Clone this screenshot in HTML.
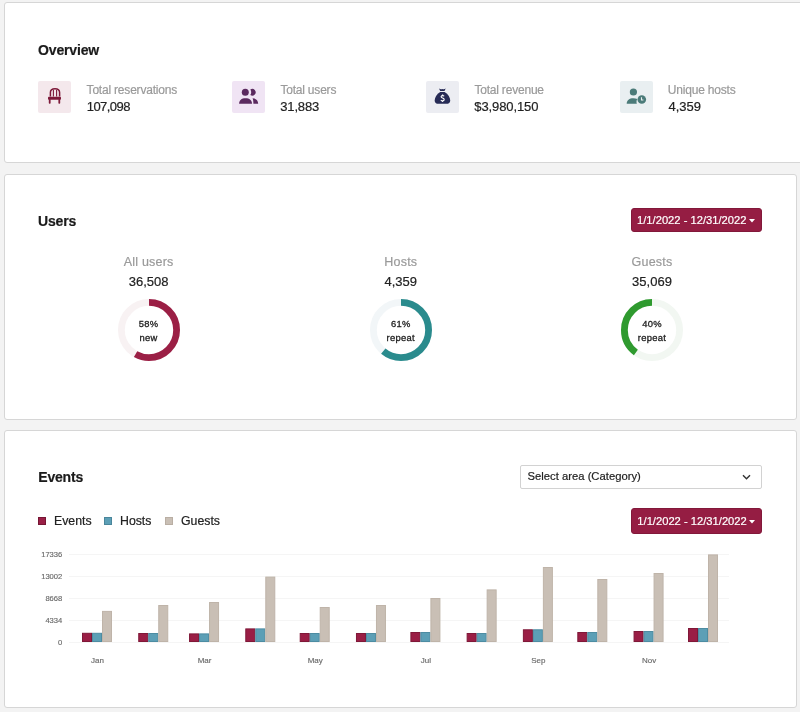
<!DOCTYPE html>
<html><head><meta charset="utf-8">
<style>
*{box-sizing:border-box;margin:0;padding:0}
html,body{will-change:transform;width:800px;height:712px;overflow:hidden;background:#f3f3f3;font-family:"Liberation Sans",sans-serif;}
.card{position:absolute;background:#fff;border:1px solid #d6d6d6;border-radius:3px;}
.abs{position:absolute;white-space:nowrap;line-height:1;-webkit-text-stroke:0.2px currentColor;}
.h{font-size:14px;font-weight:bold;color:#1b1b1b;letter-spacing:-0.15px;}
.lbl{font-size:12px;color:#9a9a9a;letter-spacing:-0.2px;}
.val{font-size:13px;color:#222;}
.ibox{position:absolute;width:33px;height:32px;border-radius:2px;}
.btn{position:absolute;background:#951d43;border:1px solid #82183a;border-radius:3px;color:#fff;font-size:11px;}
.ctr{text-align:center;}
</style></head><body>

<!-- Card 1 -->
<div class="card" style="left:4px;top:2px;width:820px;height:161px;"></div>
<div class="abs h" style="left:38px;top:42.6px;">Overview</div>

<div class="ibox" style="left:38px;top:81px;background:#f4e8ec;"></div>
<svg class="abs" style="left:38px;top:81px" width="33" height="32" viewBox="0 0 33 32">
  <g fill="none" stroke="#7d1a3a" stroke-width="1.5">
    <path d="M12.4 15.5 V11.6 C12.4 8.9 14.3 7.8 17 7.8 C19.7 7.8 21.6 8.9 21.6 11.6 V15.5"/>
    <path d="M15.4 9 V15.5 M18.6 9 V15.5" stroke-width="1.1"/>
  </g>
  <g fill="#7d1a3a">
    <rect x="10" y="15.8" width="13" height="3" rx="0.8"/>
    <rect x="10.8" y="18" width="1.8" height="4.8" rx="0.7"/>
    <rect x="20.4" y="18" width="1.8" height="4.8" rx="0.7"/>
  </g>
</svg>
<div class="abs lbl" style="left:86.6px;top:84px;">Total reservations</div>
<div class="abs val" style="left:86.7px;top:100.3px;letter-spacing:-0.54px">107,098</div>

<div class="ibox" style="left:232px;top:81px;background:#f0e4f4;"></div>
<svg class="abs" style="left:232px;top:81px" width="33" height="32" viewBox="0 0 33 32">
  <g fill="#5b2a5f">
    <circle cx="13.3" cy="11.3" r="3.5"/>
    <path d="M7.1 22.8 C7.1 19.2 9.5 17.2 13.5 17.2 C17.5 17.2 20 19.2 20 22.8 Z"/>
    <path d="M18.3 8.5 A3.4 3.4 0 1 1 18.3 14.1 C18.9 13.3 19.2 12.3 19.2 11.3 C19.2 10.3 18.9 9.3 18.3 8.5 Z"/>
    <path d="M20.6 17.2 C24 17.5 26.2 19.4 26.2 22.8 L21.4 22.8 C21.4 20.5 21.2 18.6 20.6 17.2 Z"/>
  </g>
</svg>
<div class="abs lbl" style="left:280.4px;top:84px;">Total users</div>
<div class="abs val" style="left:280.3px;top:100.3px;letter-spacing:-0.18px">31,883</div>

<div class="ibox" style="left:426px;top:81px;background:#ecedf2;"></div>
<svg class="abs" style="left:426px;top:81px" width="33" height="32" viewBox="0 0 33 32">
  <g fill="#272b56">
    <path d="M13 7.6 C14.5 8.3 15.3 8.2 16.3 7.9 C17.3 8.2 18.2 8.3 19.7 7.6 L18.5 10 L14.2 10 Z"/>
    <path d="M14.2 11 L18.6 11 C22.3 13.2 24.2 16.6 24.2 19.4 C24.2 21.8 22.8 22.8 20.3 22.8 L12.5 22.8 C10 22.8 8.7 21.8 8.7 19.4 C8.7 16.6 10.6 13.2 14.2 11 Z"/>
  </g>
  <path d="M18.1 15.3 C17.8 14.8 17.3 14.6 16.6 14.6 C15.7 14.6 15.1 15.1 15.1 15.8 C15.1 17.4 18.2 16.8 18.2 18.6 C18.2 19.4 17.5 19.9 16.5 19.9 C15.8 19.9 15.2 19.6 14.9 19.1 M16.6 13.6 V14.6 M16.6 19.9 V20.9" stroke="#fff" stroke-width="1.1" fill="none"/>
</svg>
<div class="abs lbl" style="left:474.4px;top:84px;">Total revenue</div>
<div class="abs val" style="left:474.3px;top:100.3px;letter-spacing:-0.1px">$3,980,150</div>

<div class="ibox" style="left:620px;top:81px;background:#e9eff1;"></div>
<svg class="abs" style="left:620px;top:81px" width="33" height="32" viewBox="0 0 33 32">
  <g fill="#4b7b79">
    <circle cx="13.4" cy="11" r="3.6"/>
    <path d="M6.7 22.8 C6.7 19.2 9.4 17.2 13.3 17.2 C14.8 17.2 16.2 17.4 17.3 17.9 C16.8 18.8 16.5 19.7 16.5 20.7 C16.5 21.5 16.6 22.2 16.9 22.8 Z"/>
    <circle cx="21.8" cy="18.5" r="4.3"/>
  </g>
  <path d="M21.5 16.3 V19 H23.4" stroke="#e9eff1" stroke-width="1.1" fill="none"/>
</svg>
<div class="abs lbl" style="left:667.8px;top:84px;">Unique hosts</div>
<div class="abs val" style="left:668.5px;top:100.3px;">4,359</div>

<!-- Card 2 -->
<div class="card" style="left:4px;top:174px;width:793px;height:246px;"></div>
<div class="abs h" style="left:38px;top:214px;">Users</div>
<div class="btn" style="left:631px;top:208.3px;width:131px;height:24px;"></div>
<div class="abs" style="left:637px;top:214.6px;font-size:11.2px;color:#fff;">1/1/2022 - 12/31/2022</div>
<svg class="abs" style="left:748.6px;top:218.6px" width="7" height="4"><path d="M0 0 L6 0 L3 3.5 Z" fill="#fff"/></svg>

<div class="abs lbl ctr" style="left:98.6px;top:255.5px;width:100px;font-size:12.5px;letter-spacing:0.2px;">All users</div>
<div class="abs val ctr" style="left:98.6px;top:275.3px;width:100px;">36,508</div>
<svg class="abs" style="left:113.80000000000001px;top:294.9px" width="70" height="70" viewBox="0 0 70 70">
  <circle cx="35" cy="35" r="27.6" fill="none" stroke="#f8f2f3" stroke-width="6.8"/>
  <circle cx="35" cy="35" r="27.6" fill="none" stroke="#9b1f45" stroke-width="6.8" stroke-dasharray="100.58 400" transform="rotate(-90 35 35)"/>
</svg>
<div class="abs ctr" style="left:98.6px;top:318.7px;width:100px;font-size:9.4px;color:#222;letter-spacing:0.25px;-webkit-text-stroke:0.3px #222;">58%</div>
<div class="abs ctr" style="left:98.6px;top:333.2px;width:100px;font-size:9.4px;color:#222;letter-spacing:0.3px;-webkit-text-stroke:0.3px #222;">new</div>

<div class="abs lbl ctr" style="left:350.8px;top:255.5px;width:100px;font-size:12.5px;letter-spacing:0.2px;">Hosts</div>
<div class="abs val ctr" style="left:350.8px;top:275.3px;width:100px;">4,359</div>
<svg class="abs" style="left:366.2px;top:294.9px" width="70" height="70" viewBox="0 0 70 70">
  <circle cx="35" cy="35" r="27.6" fill="none" stroke="#f2f6f8" stroke-width="6.8"/>
  <circle cx="35" cy="35" r="27.6" fill="none" stroke="#2a8b8d" stroke-width="6.8" stroke-dasharray="105.78 400" transform="rotate(-90 35 35)"/>
</svg>
<div class="abs ctr" style="left:350.8px;top:318.7px;width:100px;font-size:9.4px;color:#222;letter-spacing:0.25px;-webkit-text-stroke:0.3px #222;">61%</div>
<div class="abs ctr" style="left:350.8px;top:333.2px;width:100px;font-size:9.4px;color:#222;letter-spacing:0.3px;-webkit-text-stroke:0.3px #222;">repeat</div>

<div class="abs lbl ctr" style="left:602px;top:255.5px;width:100px;font-size:12.5px;letter-spacing:0.2px;">Guests</div>
<div class="abs val ctr" style="left:602px;top:275.3px;width:100px;">35,069</div>
<svg class="abs" style="left:616.9px;top:294.9px" width="70" height="70" viewBox="0 0 70 70">
  <circle cx="35" cy="35" r="27.6" fill="none" stroke="#f2f7f2" stroke-width="6.8"/>
  <circle cx="35" cy="35" r="27.6" fill="none" stroke="#2f9a2f" stroke-width="6.8" stroke-dasharray="69.37 400" transform="translate(70,0) scale(-1,1) rotate(-90 35 35)"/>
</svg>
<div class="abs ctr" style="left:602px;top:318.7px;width:100px;font-size:9.4px;color:#222;letter-spacing:0.25px;-webkit-text-stroke:0.3px #222;">40%</div>
<div class="abs ctr" style="left:602px;top:333.2px;width:100px;font-size:9.4px;color:#222;letter-spacing:0.3px;-webkit-text-stroke:0.3px #222;">repeat</div>

<!-- Card 3 -->
<div class="card" style="left:4px;top:430px;width:793px;height:278px;"></div>
<div class="abs h" style="left:38.3px;top:470.3px;letter-spacing:-0.2px">Events</div>
<div class="abs" style="left:520px;top:465px;width:242px;height:24px;border:1px solid #d2d2d2;border-radius:2px;background:#fff;"></div>
<div class="abs" style="left:527.6px;top:471.4px;font-size:11.25px;color:#222;">Select area (Category)</div>
<svg class="abs" style="left:742px;top:473.5px" width="10" height="7"><path d="M1 1.2 L4.5 4.8 L8 1.2" stroke="#333" stroke-width="1.4" fill="none"/></svg>

<div class="abs" style="left:38px;top:517px;width:8px;height:8px;background:#9a1f46;border:1px solid #761634;"></div>
<div class="abs" style="left:54px;top:515px;font-size:12.3px;color:#222;">Events</div>
<div class="abs" style="left:104px;top:517px;width:8px;height:8px;background:#5c9fb6;border:1px solid #4a869b;"></div>
<div class="abs" style="left:120px;top:515px;font-size:12.3px;color:#222;">Hosts</div>
<div class="abs" style="left:165px;top:517px;width:8px;height:8px;background:#c9bfb5;border:1px solid #b9aea3;"></div>
<div class="abs" style="left:181px;top:515px;font-size:12.3px;color:#222;">Guests</div>

<div class="btn" style="left:631px;top:508px;width:131px;height:26px;"></div>
<div class="abs" style="left:637.3px;top:516.2px;font-size:11.2px;color:#fff;">1/1/2022 - 12/31/2022</div>
<svg class="abs" style="left:749.3px;top:519.7px" width="7" height="4"><path d="M0 0 L6 0 L3 3.5 Z" fill="#fff"/></svg>

<svg id="chart" class="abs" style="left:0;top:540px" width="800" height="140" viewBox="0 540 800 140" font-family="Liberation Sans">
<line x1="69" y1="554.5" x2="729" y2="554.5" stroke="#f5f5f5" stroke-width="1"/>
<text x="62.3" y="557" text-anchor="end" font-size="7.6" fill="#6a6a6a" stroke="#6a6a6a" stroke-width="0.15">17336</text>
<line x1="69" y1="576.5" x2="729" y2="576.5" stroke="#f5f5f5" stroke-width="1"/>
<text x="62.3" y="579" text-anchor="end" font-size="7.6" fill="#6a6a6a" stroke="#6a6a6a" stroke-width="0.15">13002</text>
<line x1="69" y1="598.5" x2="729" y2="598.5" stroke="#f5f5f5" stroke-width="1"/>
<text x="62.3" y="601" text-anchor="end" font-size="7.6" fill="#6a6a6a" stroke="#6a6a6a" stroke-width="0.15">8668</text>
<line x1="69" y1="620.5" x2="729" y2="620.5" stroke="#f5f5f5" stroke-width="1"/>
<text x="62.3" y="623" text-anchor="end" font-size="7.6" fill="#6a6a6a" stroke="#6a6a6a" stroke-width="0.15">4334</text>
<line x1="69" y1="642.5" x2="729" y2="642.5" stroke="#f5f5f5" stroke-width="1"/>
<text x="62.3" y="645" text-anchor="end" font-size="7.6" fill="#6a6a6a" stroke="#6a6a6a" stroke-width="0.15">0</text>
<rect x="82.50" y="633.30" width="9" height="8.20" fill="#9a1e45" stroke="#7f1838" stroke-width="1"/>
<rect x="92.50" y="633.30" width="9" height="8.20" fill="#5c9fb6" stroke="#4d8ca2" stroke-width="1"/>
<rect x="102.50" y="611.40" width="9" height="30.10" fill="#c9bfb5" stroke="#bfb4a9" stroke-width="1"/>
<rect x="138.75" y="633.50" width="9" height="8.00" fill="#9a1e45" stroke="#7f1838" stroke-width="1"/>
<rect x="148.75" y="633.50" width="9" height="8.00" fill="#5c9fb6" stroke="#4d8ca2" stroke-width="1"/>
<rect x="158.75" y="605.50" width="9" height="36.00" fill="#c9bfb5" stroke="#bfb4a9" stroke-width="1"/>
<rect x="189.55" y="633.90" width="9" height="7.60" fill="#9a1e45" stroke="#7f1838" stroke-width="1"/>
<rect x="199.55" y="633.90" width="9" height="7.60" fill="#5c9fb6" stroke="#4d8ca2" stroke-width="1"/>
<rect x="209.55" y="602.50" width="9" height="39.00" fill="#c9bfb5" stroke="#bfb4a9" stroke-width="1"/>
<rect x="245.79" y="628.90" width="9" height="12.60" fill="#9a1e45" stroke="#7f1838" stroke-width="1"/>
<rect x="255.79" y="628.90" width="9" height="12.60" fill="#5c9fb6" stroke="#4d8ca2" stroke-width="1"/>
<rect x="265.79" y="577.10" width="9" height="64.40" fill="#c9bfb5" stroke="#bfb4a9" stroke-width="1"/>
<rect x="300.22" y="633.50" width="9" height="8.00" fill="#9a1e45" stroke="#7f1838" stroke-width="1"/>
<rect x="310.22" y="633.50" width="9" height="8.00" fill="#5c9fb6" stroke="#4d8ca2" stroke-width="1"/>
<rect x="320.22" y="607.50" width="9" height="34.00" fill="#c9bfb5" stroke="#bfb4a9" stroke-width="1"/>
<rect x="356.47" y="633.50" width="9" height="8.00" fill="#9a1e45" stroke="#7f1838" stroke-width="1"/>
<rect x="366.47" y="633.50" width="9" height="8.00" fill="#5c9fb6" stroke="#4d8ca2" stroke-width="1"/>
<rect x="376.47" y="605.50" width="9" height="36.00" fill="#c9bfb5" stroke="#bfb4a9" stroke-width="1"/>
<rect x="410.90" y="632.50" width="9" height="9.00" fill="#9a1e45" stroke="#7f1838" stroke-width="1"/>
<rect x="420.90" y="632.50" width="9" height="9.00" fill="#5c9fb6" stroke="#4d8ca2" stroke-width="1"/>
<rect x="430.90" y="598.50" width="9" height="43.00" fill="#c9bfb5" stroke="#bfb4a9" stroke-width="1"/>
<rect x="467.15" y="633.50" width="9" height="8.00" fill="#9a1e45" stroke="#7f1838" stroke-width="1"/>
<rect x="477.15" y="633.50" width="9" height="8.00" fill="#5c9fb6" stroke="#4d8ca2" stroke-width="1"/>
<rect x="487.15" y="589.90" width="9" height="51.60" fill="#c9bfb5" stroke="#bfb4a9" stroke-width="1"/>
<rect x="523.39" y="629.80" width="9" height="11.70" fill="#9a1e45" stroke="#7f1838" stroke-width="1"/>
<rect x="533.39" y="629.80" width="9" height="11.70" fill="#5c9fb6" stroke="#4d8ca2" stroke-width="1"/>
<rect x="543.39" y="567.50" width="9" height="74.00" fill="#c9bfb5" stroke="#bfb4a9" stroke-width="1"/>
<rect x="577.82" y="632.50" width="9" height="9.00" fill="#9a1e45" stroke="#7f1838" stroke-width="1"/>
<rect x="587.82" y="632.50" width="9" height="9.00" fill="#5c9fb6" stroke="#4d8ca2" stroke-width="1"/>
<rect x="597.82" y="579.50" width="9" height="62.00" fill="#c9bfb5" stroke="#bfb4a9" stroke-width="1"/>
<rect x="634.07" y="631.50" width="9" height="10.00" fill="#9a1e45" stroke="#7f1838" stroke-width="1"/>
<rect x="644.07" y="631.50" width="9" height="10.00" fill="#5c9fb6" stroke="#4d8ca2" stroke-width="1"/>
<rect x="654.07" y="573.50" width="9" height="68.00" fill="#c9bfb5" stroke="#bfb4a9" stroke-width="1"/>
<rect x="688.50" y="628.50" width="9" height="13.00" fill="#9a1e45" stroke="#7f1838" stroke-width="1"/>
<rect x="698.50" y="628.50" width="9" height="13.00" fill="#5c9fb6" stroke="#4d8ca2" stroke-width="1"/>
<rect x="708.50" y="554.90" width="9" height="86.60" fill="#c9bfb5" stroke="#bfb4a9" stroke-width="1"/>
<text x="97.50" y="663.1" text-anchor="middle" font-size="8" fill="#6a6a6a" stroke="#6a6a6a" stroke-width="0.15">Jan</text>
<text x="204.55" y="663.1" text-anchor="middle" font-size="8" fill="#6a6a6a" stroke="#6a6a6a" stroke-width="0.15">Mar</text>
<text x="315.22" y="663.1" text-anchor="middle" font-size="8" fill="#6a6a6a" stroke="#6a6a6a" stroke-width="0.15">May</text>
<text x="425.90" y="663.1" text-anchor="middle" font-size="8" fill="#6a6a6a" stroke="#6a6a6a" stroke-width="0.15">Jul</text>
<text x="538.39" y="663.1" text-anchor="middle" font-size="8" fill="#6a6a6a" stroke="#6a6a6a" stroke-width="0.15">Sep</text>
<text x="649.07" y="663.1" text-anchor="middle" font-size="8" fill="#6a6a6a" stroke="#6a6a6a" stroke-width="0.15">Nov</text>
</svg>

</body></html>
